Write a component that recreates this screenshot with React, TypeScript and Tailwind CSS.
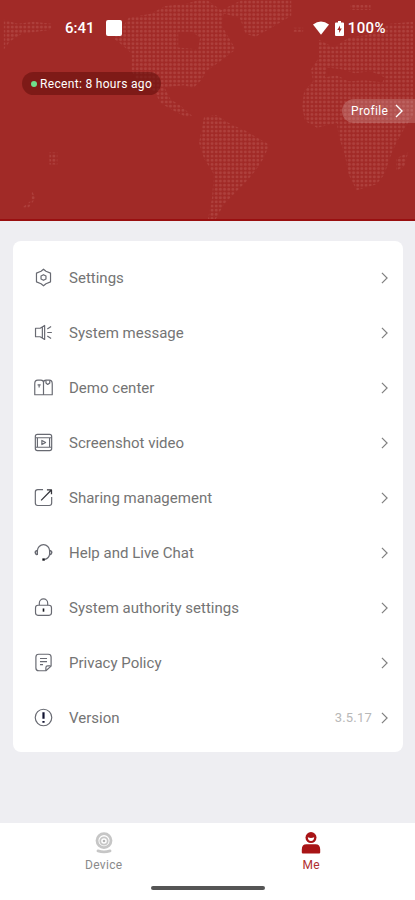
import type { ReactNode } from 'react'

const menu: { label: string; icon: ReactNode; value?: string }[] = [
  {
    label: 'Settings',
    icon: (
      <>
        <path d="M10 1.3 12.6 3.4 17.4 5.4V14.6L12.6 16.6 10 18.7 7.4 16.6 2.6 14.6V5.4L7.4 3.4Z" />
        <path d="M10 7 12.6 8.5V11.5L10 13 7.4 11.5V8.5Z" />
      </>
    ),
  },
  {
    label: 'System message',
    icon: (
      <>
        <path d="M6.5 5.5H1.6V14.5H6.5M6.5 5.5 11.2 2.6V17.4L6.5 14.5M8.8 4.5V15.5" />
        <path d="M14 6.4 18 3.8M14 10H18.8M14 13.6 18 16.2" />
      </>
    ),
  },
  {
    label: 'Demo center',
    icon: (
      <>
        <path d="M10 4.5V17.6M10 17.6H.8V6Q.8 2.2 4 2.2H7.3Q10 2.2 10 4.8Q10 2.2 12.7 2.2H16Q19.2 2.2 19.2 6V17.6Z" />
        <path d="M3.8 7.2H7M5.4 7.2V10M12.6 2.6V5.2L14.4 6.8 16.6 5.2V2.6" />
      </>
    ),
  },
  {
    label: 'Screenshot video',
    icon: (
      <>
        <rect x="1.4" y="1.4" width="17.2" height="17.2" rx="2.2" />
        <path d="M1.4 5H18.6M1.4 15H18.6M3.6 5V15M16.4 5V15" />
        <path d="M8.3 7.8V12.2L12.2 10Z" />
      </>
    ),
  },
  {
    label: 'Sharing management',
    icon: (
      <>
        <path d="M9.5 1.8H4Q1.4 1.8 1.4 4.2V15.8Q1.4 18.4 4 18.4H16Q18.6 18.4 18.6 15.8V9.5" />
        <path d="M7.5 13 18 2.4M13.6 2H18.4V6.6" stroke="#35363c" strokeWidth="1.35" />
      </>
    ),
  },
  {
    label: 'Help and Live Chat',
    icon: (
      <>
        <path d="M3.6 12.5V8.2A6.4 6.4 0 0 1 16.4 8.2V12Q15.8 16 11.5 17.3" />
        <path d="M3.4 7.8Q1.2 8.4 1.4 10.2 1.6 11.9 3.4 12.4M16.6 7.8Q18.8 8.4 18.6 10.2 18.4 11.9 16.6 12.4" strokeWidth="1.7" />
        <path d="M8.8 17.4H11.4" stroke="#111218" strokeWidth="2.4" />
      </>
    ),
  },
  {
    label: 'System authority settings',
    icon: (
      <>
        <rect x="1.6" y="7.6" width="16.8" height="10.6" rx="2.6" />
        <path d="M5.6 7.6V5.4A4.4 4.4 0 0 1 14.4 5.4V7.6" />
        <path d="M10 11V14.4" stroke="#15161c" strokeWidth="1.7" />
      </>
    ),
  },
  {
    label: 'Privacy Policy',
    icon: (
      <>
        <path d="M12.5 18.7H5Q2 18.7 2 15.8V4.2Q2 1.3 5 1.3H15Q18 1.3 18 4.2V13.8Z" />
        <path d="M12.5 18.4V15.4Q12.5 13.6 14.4 13.6H17.6M6.3 5.8H13.7M6.3 9H13.7M6.3 12.2H9.5" />
      </>
    ),
  },
  {
    label: 'Version',
    value: '3.5.17',
    icon: (
      <>
        <circle cx="10" cy="10" r="8.7" />
        <path d="M10 4.4V11.4M10 13.6V15.6" stroke="#101230" strokeWidth="2.3" />
      </>
    ),
  },
]

function Chevron({ className }: { className: string }) {
  return (
    <svg viewBox="0 0 8 14" fill="none" strokeWidth="1.4" className={className}>
      <path d="M1 1 7 7 1 13" stroke="currentColor" />
    </svg>
  )
}

function WorldMap() {
  return (
    <svg className="absolute inset-0 h-full w-full" viewBox="0 0 415 221">
      <defs>
        <pattern id="dots" width="4.2" height="4.2" patternUnits="userSpaceOnUse">
          <circle cx="2.1" cy="2.1" r="1.45" fill="#c0605a" fillOpacity="0.42" />
        </pattern>
      </defs>
      <g fill="url(#dots)">
        {/* north america */}
        <path d="M112 38 122 27 128 18 150 14 165 6 185 4 199 0H207L224 12 222 26 236 50 220 62 206 72 202 80 193 89 184 86 164 88 170 100 182 108 192 117 186 118 172 111 160 104 154 92 140 86 131 72V54L122 46ZM178 32V48L198 50 200 38 192 32Z" fillRule="evenodd" />
        <path d="M2 20 16 24 32 22 50 24 50 30 20 34 8 42 2 50Z" />
        {/* greenland */}
        <path d="M218 12 234 4 242 0H292V16L272 28 256 37 246 34 240 18Z" />
        {/* south america */}
        <path d="M204 118 216 116 232 126 246 132 256 138 270 146 264 160 256 172 246 184 234 196 224 206 216 221H208L212 200 214 176 204 160 199 144Z" />
        {/* europe and africa */}
        <path d="M320 40 335 48 350 38 370 35 392 24 415 22V116L406 130 398 144 392 158 386 176 378 186 358 192 350 176 346 156 340 138 338 124 318 129 306 122 303 108 305 92 314 82 312 70 320 58Z" />
        <path d="M398 160 410 154 406 168 398 172ZM352 5H372V10H352ZM294 28H304V32H294Z" />
        {/* pacific islands */}
        <path d="M48 154H56V166H48ZM30 192 34 200 26 211 20 210 30 202Z" />
      </g>
      <g fill="#a12a27">
        <path d="M328 68 342 70 356 74 372 72 386 78 384 83 366 81 350 82 338 76 326 78Z" />
      </g>
    </svg>
  )
}

export default function App() {
  return (
    <div className="flex h-[900px] w-[415px] flex-col overflow-hidden bg-[#eeeef2] font-['Roboto',sans-serif]">
      {/* Header */}
      <header className="relative h-[221px] shrink-0 border-b-2 border-[#990f10] bg-[#a12a27] text-white">
        <WorldMap />
        <div className="relative flex h-14 items-center justify-between pl-[65px] pr-[29px]">
          <div className="flex items-center gap-[11px]">
            <span className="text-[15px] font-medium leading-none">6:41</span>
            <span className="size-4 rounded-[2px] bg-white" />
          </div>
          <div className="flex items-center">
            <svg viewBox="0 0 16 14" className="h-[14px] w-4 fill-white">
              <path d="M0 3.6Q8-2.8 16 3.6L8 13.8Z" />
            </svg>
            <svg viewBox="0 0 9 15" className="ml-[6px] h-[15px] w-[9px]">
              <path d="M3 0H6V1.5H8Q9 1.5 9 2.5V14Q9 15 8 15H1Q0 15 0 14V2.5Q0 1.5 1 1.5H3Z" fill="#fff" />
              <path d="M5 4.5 2.3 9H4.1V12L6.8 7.6H5Z" fill="#a12a27" />
            </svg>
            <span className="ml-[4px] text-[15px] font-medium leading-none tracking-[0.4px]">100%</span>
          </div>
        </div>
        <div className="relative ml-[22px] mt-4 flex h-[23px] w-[139px] items-center rounded-full bg-[#68100d]/60 pl-[9px]">
          <span className="mr-[3px] size-[6px] rounded-full bg-[#6fe08b]" />
          <span className="whitespace-nowrap text-[12px] tracking-[0.32px]">Recent: 8 hours ago</span>
        </div>
        <div className="relative ml-auto mt-[4px] flex h-6 w-[73px] items-center rounded-l-full bg-white/18 pl-[9px]">
          <span className="text-[12px] tracking-[0.35px]">Profile</span>
          <Chevron className="ml-[7px] h-[14px] w-2 text-white" />
        </div>
      </header>

      {/* Menu */}
      <main className="flex-1 pl-[13px] pr-[12px] pt-[20px]">
        <ul className="h-[511px] rounded-[8px] bg-white pt-[9px]">
          {menu.map(item => (
            <li key={item.label} className="flex h-[55px] items-center pl-[21px] pr-[15px]">
              <svg viewBox="0 0 20 20" fill="none" stroke="#686a72" strokeWidth="1.25" strokeLinejoin="round" className="size-[19px]">
                {item.icon}
              </svg>
              <span className="ml-4 pt-[2px] text-[15px] tracking-[0.01px] text-[#747474]">{item.label}</span>
              {item.value && <span className="ml-auto mr-[9px] text-[13px] tracking-[0.2px] text-[#b8b8b8]">{item.value}</span>}
              <Chevron className={item.value ? 'h-3 w-[7px] text-[#808080]' : 'ml-auto h-3 w-[7px] text-[#808080]'} />
            </li>
          ))}
        </ul>
      </main>

      {/* Tab bar */}
      <footer className="h-[77px] bg-white">
        <nav className="grid h-[58px] grid-cols-2 text-[12px] leading-[14px] tracking-[0.3px]">
          <div className="flex flex-col items-center pt-[9px] text-[#8a8a8a]">
            <svg viewBox="0 0 18 22" fill="none" className="h-[22px] w-[18px]">
              <circle cx="9" cy="8.6" r="7" stroke="#c6c6c6" strokeWidth="2.8" />
              <circle cx="9" cy="9" r="3.7" stroke="#c6c6c6" strokeWidth="1.8" />
              <circle cx="9" cy="9" r="1.3" fill="#b5b5b5" />
              <path d="M3 18.9Q9 20.7 15 18.9" stroke="#c6c6c6" strokeWidth="2.8" strokeLinecap="round" />
            </svg>
            <span className="mt-[4px]">Device</span>
          </div>
          <div className="flex flex-col items-center pt-[9px] text-[#b0302e]">
            <svg viewBox="0 0 20 22" className="h-[22px] w-5">
              <circle cx="10" cy="5.6" r="5.5" fill="#a81416" />
              <path d="M6.8 5.3Q10 6.8 13.2 5.3Q13 9 10 9T6.8 5.3Z" fill="#fff" />
              <path d="M.8 20.5V17.5Q.8 12.2 5.5 12.2H14.5Q19.2 12.2 19.2 17.5V20.5Q19.2 21.6 18.1 21.6H1.9Q.8 21.6.8 20.5Z" fill="#a81416" />
            </svg>
            <span className="mt-[4px]">Me</span>
          </div>
        </nav>
        <div className="mx-auto mt-[5px] h-1 w-[114px] rounded-full bg-[#555]" />
      </footer>
    </div>
  )
}
